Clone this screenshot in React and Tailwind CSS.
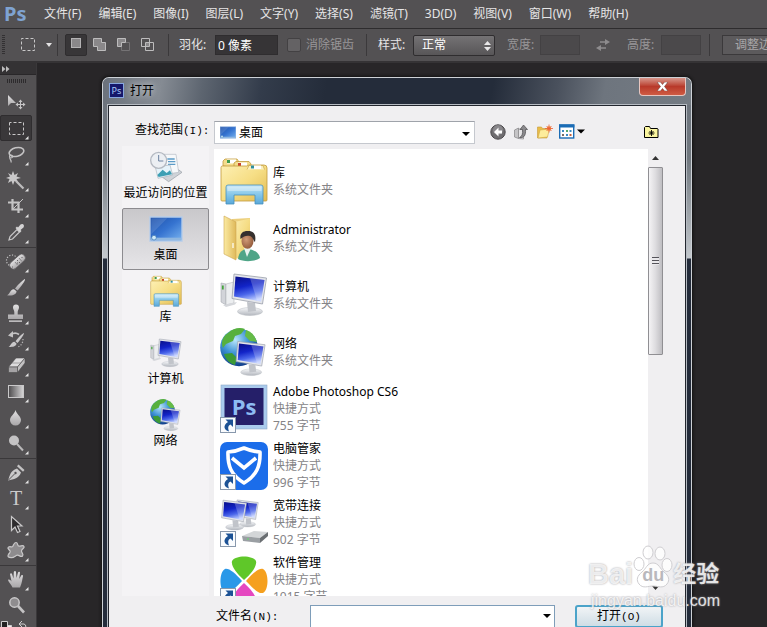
import React from 'react';

const MENUS = ['文件(F)', '编辑(E)', '图像(I)', '图层(L)', '文字(Y)', '选择(S)', '滤镜(T)', '3D(D)', '视图(V)', '窗口(W)', '帮助(H)'];

// shared gradients, referenced by id from the icons below
const Gradients = () => (
  <svg className="absolute w-0 h-0" aria-hidden="true">
    <defs>
      <linearGradient id="folder" x1="0" y1="0" x2="1" y2="1">
        <stop offset="0" stopColor="#fdf0b5" />
        <stop offset="0.5" stopColor="#f6de85" />
        <stop offset="1" stopColor="#e2bb52" />
      </linearGradient>
      <linearGradient id="flap" x1="0" y1="0" x2="1" y2="0">
        <stop offset="0" stopColor="#fbeaa2" />
        <stop offset="1" stopColor="#dfb95a" />
      </linearGradient>
      <linearGradient id="stand" x1="0" y1="0" x2="0" y2="1">
        <stop offset="0" stopColor="#c4e6f6" />
        <stop offset="0.5" stopColor="#86c7ea" />
        <stop offset="1" stopColor="#5aa8d8" />
      </linearGradient>
      <linearGradient id="screen" x1="0.2" y1="0" x2="0.5" y2="1">
        <stop offset="0" stopColor="#0a1290" />
        <stop offset="0.4" stopColor="#1224c8" />
        <stop offset="0.7" stopColor="#4a66ea" />
        <stop offset="1" stopColor="#c2d0ff" />
      </linearGradient>
      <linearGradient id="metal" x1="0" y1="0" x2="0" y2="1">
        <stop offset="0" stopColor="#f7f8fa" />
        <stop offset="1" stopColor="#b3b7be" />
      </linearGradient>
      <radialGradient id="globe" cx="0.4" cy="0.3" r="0.7">
        <stop offset="0" stopColor="#b9e6fb" />
        <stop offset="0.5" stopColor="#3f94d6" />
        <stop offset="1" stopColor="#123f8c" />
      </radialGradient>
      <linearGradient id="desk" x1="0" y1="0" x2="1" y2="1">
        <stop offset="0" stopColor="#1d4fa8" />
        <stop offset="0.5" stopColor="#3573d0" />
        <stop offset="1" stopColor="#79b4f0" />
      </linearGradient>
      <radialGradient id="skin" cx="0.4" cy="0.4" r="0.7">
        <stop offset="0" stopColor="#d19c78" />
        <stop offset="1" stopColor="#8d5335" />
      </radialGradient>
      <linearGradient id="tool" x1="0" y1="0" x2="0" y2="1">
        <stop offset="0" stopColor="#e2e1e2" />
        <stop offset="1" stopColor="#a9a7a9" />
      </linearGradient>
      <linearGradient id="ramp">
        <stop offset="0" stopColor="#4c4a4c" />
        <stop offset="1" stopColor="#d8d7d8" />
      </linearGradient>
    </defs>
  </svg>
);

/* ---------- tool icons, 32x26 box ---------- */

const toolArt = {
  move: (
    <g>
      <path d="M8 6v11l3-3 5 0z" fill="url(#tool)" />
      <path d="M20.500 11.500v8M16.500 15.500h8" stroke="#c6c5c6" />
      <path d="M20.500 10.500l2 2.500h-4zM20.500 20.500l2-2.500h-4zM15.500 15.500l2.500-2v4zM25.500 15.500l-2.500-2v4z" fill="#c6c5c6" />
    </g>
  ),
  marquee: <rect x="9.500" y="7.500" width="14" height="12" fill="none" stroke="#c9c8c9" strokeDasharray="3 2" strokeDashoffset="1" />,
  lasso: (
    <g fill="none" stroke="#c4c3c4" strokeWidth="1.600">
      <ellipse cx="16.500" cy="11" rx="7.500" ry="4.300" transform="rotate(-14 16.500 11)" />
      <circle cx="11" cy="15.500" r="1.500" strokeWidth="1.200" />
      <path d="M10 16.500c-1 2 2 2 1 5" strokeWidth="1.200" />
    </g>
  ),
  wand: (
    <g>
      <path d="M13 4l1.500 4 3.500-2-1.500 3.500L21 11l-4.500 1 2 4-4-2-1.500 4-1.500-4-3.500 2 1.500-4L6 11l4-1.500L8 6l3.500 2z" fill="#c9c8c9" />
      <path d="M16 14l7.500 7.500" stroke="#bdbcbd" strokeWidth="2.200" />
    </g>
  ),
  crop: (
    <g fill="none" stroke="#c4c3c4" strokeWidth="2.200">
      <path d="M12.500 6v10.500H23M8 9.500h10.500V20" />
      <path d="M13 16l10-10" strokeWidth="1" />
    </g>
  ),
  eyedropper: (
    <g>
      <path d="M9 21l1-3.500 7-7 2.500 2.500-7 7z" fill="#555355" stroke="#c9c8c9" strokeWidth="1.200" />
      <path d="M15.500 9l1.500-1.500 1 1 2.500-3c2-1.500 4.500.500 3 3l-3 2.500 1 1-1.500 1.500z" fill="#d3d2d3" />
    </g>
  ),
  heal: (
    <g>
      <circle cx="12" cy="12.500" r="5.500" fill="none" stroke="#c4c3c4" strokeWidth="1.200" strokeDasharray="1.200 1.600" />
      <rect x="8.500" y="10" width="18.500" height="7.500" rx="3.700" fill="url(#tool)" stroke="#555355" strokeWidth="0.600" transform="rotate(-42 17.500 14)" />
      <path d="M15 14l2.500 3M19 10l3 3.500" stroke="#777577" strokeWidth="0.800" />
      <path d="M17.500 12v1M19.500 14v1M17.500 14.500v1M12.500 18.500v1M22 9v1" stroke="#666466" />
    </g>
  ),
  brush: (
    <g fill="url(#tool)">
      <path d="M25 5c.700 1-4 8-7.500 11.500L15 14.500C18 10.500 24 5 25 5z" />
      <path d="M14 15.200l2.500 2c0 3-4 5.300-9.500 4 3-.700 2.500-5.500 7-6z" />
    </g>
  ),
  stamp: (
    <g fill="url(#tool)">
      <path d="M13 7.500a3 3 0 016 0c0 2-1.300 2.500-1.300 4.500v2.500H23V19H8v-4.500h6.300V12c0-2-1.300-2.500-1.300-4.500z" />
      <path d="M9 20.500h13V22H9z" />
    </g>
  ),
  history: (
    <g>
      <path d="M24 7c.500.800-3 6-6.500 10l-2-1.800C18.500 11 23 7 24 7z" fill="#c9c8c9" />
      <path d="M14.500 15.800l2 1.800c0 2.500-4 4-8 3.200 2.500-.600 2-4.500 6-5z" fill="#c9c8c9" />
      <path d="M11 8.500c3-2 6-1.500 8 0" fill="none" stroke="#c4c3c4" strokeWidth="1.600" />
      <path d="M13 5v6.500L8 9.500z" fill="#c4c3c4" />
      <path d="M23 13c0 3-1 6-5 8" fill="none" stroke="#b4b3b4" strokeWidth="1.200" strokeDasharray="1.200 1.600" />
    </g>
  ),
  eraser: (
    <g stroke="#4b494b" strokeWidth="0.600">
      <path d="M16 6h9l-7.500 9H8.500z" fill="#dddcdd" />
      <path d="M8.500 15h9v5.500h-9z" fill="#a5a3a5" />
      <path d="M17.500 15L25 6v5l-7.500 9.500z" fill="#c2c1c2" />
      <path d="M12 11l9 0" stroke="#7b797b" />
    </g>
  ),
  gradient: <rect x="8.500" y="7.500" width="15" height="12" fill="url(#ramp)" stroke="#c9c8c9" />,
  blur: <path d="M15.500 6c1 4 5.500 6.500 5.500 10a5.500 5.500 0 01-11 0c0-3.500 4.500-6 5.500-10z" fill="url(#tool)" />,
  dodge: (
    <g>
      <path d="M17 14l6 6.500" stroke="#b9b8b9" strokeWidth="2" />
      <circle cx="14" cy="10.500" r="5" fill="#c4c3c4" />
    </g>
  ),
  pen: (
    <g>
      <path d="M8 21.500c2-5 2-9.500 9-12l4 4c-2 6-7 6.500-13 8z" fill="#cbcacb" />
      <path d="M8.500 21l6-6" stroke="#555355" />
      <circle cx="15.500" cy="14" r="1.200" fill="#555355" />
      <path d="M18.500 5.500l6 5.500-1.500 1.800-6-5.500z" fill="#c4c3c4" />
    </g>
  ),
  select: <path d="M11.500 5.500v14l3.500-3.500 2.500 5.500 2.500-1-2.500-5.500h4.500z" fill="#2c2a2c" stroke="#c9c8c9" strokeWidth="1.200" />,
  shape: (
    <path
      d="M16 5.500c2.200 0 1 3.500 3 3.700s4-1.700 5 .300-3 2.500-2.500 4.800 2.500 3 1 4.700-3.500-1.200-5.300-.800-3.200 2.800-6 2.500-4-1.200-2.800-3.200 2.800-2 1.500-3.800-3-2.500-1.200-3.700 3 .800 4-.500 1-4 3.300-4z"
      fill="#8e8c8e"
      stroke="#c9c8c9"
      strokeWidth="1.200"
    />
  ),
  hand: (
    <path
      d="M12.500 21.500c-1-3-4-5-4.500-7.500 1-1 2.500 0 3.500 1.500L10 8c.500-1.300 1.800-1 2 0l1.500 4.500L13.800 6c.500-1.300 2-1.300 2.200 0l.500 6 1.500-5.500c.500-1.200 2-1 2 .200l-.800 6.300 2-3.500c.800-1 2-.300 1.800.800C22.300 13 22 17 20 21.500z"
      fill="url(#tool)"
    />
  ),
  zoom: (
    <g>
      <path d="M18 14l6 6.500" stroke="#c4c3c4" strokeWidth="2.600" />
      <circle cx="14.500" cy="10.500" r="4.700" fill="#8f8d8f" stroke="#c9c8c9" strokeWidth="1.500" />
    </g>
  ),
  type: (
    <text x="16" y="20" textAnchor="middle" fontSize="20" fontFamily="Liberation Serif, serif" fill="#cbcacb">T</text>
  ),
};

const TOOL_GROUPS = [
  [['move', '移动'], ['marquee', '矩形选框'], ['lasso', '套索'], ['wand', '魔棒'], ['crop', '裁剪'], ['eyedropper', '吸管']],
  [['heal', '修复画笔'], ['brush', '画笔'], ['stamp', '仿制图章'], ['history', '历史记录画笔'], ['eraser', '橡皮擦'], ['gradient', '渐变'], ['blur', '模糊'], ['dodge', '减淡']],
  [['pen', '钢笔'], ['type', '文字'], ['select', '路径选择'], ['shape', '自定形状']],
  [['hand', '抓手'], ['zoom', '缩放']],
];

const ToolButton = ({ name, label }) => (
  <button
    aria-label={label}
    className={
      name === 'marquee'
        ? 'block w-[32px] h-[26px] rounded-[2px] border border-[#2f2d2f] bg-[#3a383a]'
        : 'block w-[32px] h-[26px] border border-transparent'
    }
  >
    <svg width="32" height="26" viewBox="0 0 32 26" className="-ml-px -mt-px overflow-visible">
      {toolArt[name]}
      {name !== 'move' && name !== 'zoom' && <path d="M25 24.500h3.500V21z" fill="#e4e3e4" />}
    </svg>
  </button>
);

const Toolbar = () => (
  <aside className="w-[37px] shrink-0 bg-[#535153] border-r border-[#3a383a] overflow-hidden">
    <div className="h-3 bg-[#343234] border-b border-[#292729] flex items-center pl-[2px]">
      <svg width="8" height="6"><path d="M0 0l3.500 3L0 6zM4 0l3.500 3L4 6z" fill="#bdbcbd" /></svg>
    </div>
    <div className="h-[14px] pl-[7px] pt-1">
      <div className="w-5 h-1 bg-[repeating-linear-gradient(90deg,#2d2b2d_0_1px,#535153_1px_2px)]" />
    </div>
    {TOOL_GROUPS.map((group, i) => (
      <div key={i} className={i > 0 ? 'mt-[2px] border-t border-[#3a383a]' : ''}>
        {group.map(([name, label]) => <ToolButton key={name} name={name} label={label} />)}
      </div>
    ))}
    <svg width="32" height="12" fill="none" stroke="#d0cfd0" className="mt-[2px]">
      <path d="M1.500 1.500h6v8h-6z" fill="#222" />
      <path d="M7.500 5.500h4v6h-4" fill="#eee" />
      <path d="M20 4h4q2 0 2 4M22 1l-3 3 3 3" />
    </svg>
  </aside>
);

/* ---------- menu and options bars ---------- */

const MenuBar = () => (
  <nav className="h-[28px] shrink-0 flex items-center gap-[17px] bg-[#535153] pl-1 overflow-hidden whitespace-nowrap">
    <span className="w-[23px] text-[20px] leading-6 font-bold text-[#7fa3d1]">Ps</span>
    {MENUS.map((m) => (
      <button key={m} className="shrink-0 text-[#e6e5e6]">{m}</button>
    ))}
  </nav>
);

const Divider = () => <div className="w-px h-[22px] shrink-0 bg-[#3b393b]" />;

const OptionsBar = () => (
  <div className="h-[35px] shrink-0 flex items-center bg-[#535153] border-t border-b-2 border-t-[#2e2c2e] border-b-[#353335] overflow-hidden whitespace-nowrap text-[#e6e5e6]">
    <div className="ml-[2px] w-[3px] h-5 shrink-0 bg-[repeating-linear-gradient(180deg,#333133_0_1px,#535153_1px_2px)]" />
    <button className="ml-4 w-8 h-5 shrink-0" aria-label="工具预设">
      <svg width="32" height="20">
        <rect x="0.500" y="3.500" width="13" height="12" fill="none" stroke="#c9c8c9" strokeDasharray="3 2" strokeDashoffset="1" />
        <path d="M25 8h6l-3 4z" fill="#e4e3e4" />
      </svg>
    </button>
    <div className="ml-1"><Divider /></div>
    <button className="ml-[7px] w-[22px] h-[22px] shrink-0 rounded-[2px] border border-[#2f2d2f] bg-[#383638]" aria-label="新选区">
      <svg width="20" height="20"><rect x="5.500" y="3.500" width="9" height="9" fill="#8a888a" stroke="#b4b3b4" /></svg>
    </button>
    <button className="ml-[6px] shrink-0" aria-label="添加到选区">
      <svg width="14" height="14" fill="#8a888a" stroke="#bdbcbd"><path d="M.500.500h8v4h4v8h-8v-4h-4z" /></svg>
    </button>
    <button className="ml-[10px] shrink-0" aria-label="从选区减去">
      <svg width="14" height="14"><path d="M.500.500h8v4h-4v4h-4z" fill="#8a888a" stroke="#bdbcbd" /><path d="M9 4.500h3.500v8h-8V9" fill="none" stroke="#757375" /></svg>
    </button>
    <button className="ml-[10px] shrink-0" aria-label="与选区交叉">
      <svg width="14" height="14" fill="none" stroke="#bdbcbd"><path d="M.500.500h8v8h-8zM4.500 4.500h8v8h-8z" /><path d="M5 5h3v3H5z" fill="#8a888a" stroke="none" /></svg>
    </button>
    <div className="ml-[13px]"><Divider /></div>
    <label htmlFor="feather" className="ml-[10px] w-9 shrink-0">羽化:</label>
    <input id="feather" defaultValue="0 像素" className="w-[63px] h-5 shrink-0 px-[2px] bg-[#363436] border border-[#2f2d2f] text-white" />
    <label className="ml-[9px] shrink-0 flex items-center gap-[5px] text-[#989698]">
      <input type="checkbox" disabled className="appearance-none w-[14px] h-[14px] rounded-[2px] border border-[#434143] bg-[#646264]" />
      消除锯齿
    </label>
    <div className="ml-3"><Divider /></div>
    <label htmlFor="style" className="ml-[11px] w-[35px] shrink-0">样式:</label>
    <div className="relative shrink-0">
      <select id="style" className="block appearance-none w-[82px] h-[21px] pl-2 rounded-[2px] border border-[#2f2d2f] bg-linear-to-b from-[#747274] to-[#585658] text-white">
        <option>正常</option>
      </select>
      <svg width="7" height="10" className="absolute right-1 top-[6px] pointer-events-none"><path d="M0 4l3.500-4L7 4zM0 6l3.500 4L7 6z" fill="#e9e8e9" /></svg>
    </div>
    <label htmlFor="w" className="ml-3 w-[33px] shrink-0 text-[#989698]">宽度:</label>
    <input id="w" disabled className="w-[40px] h-5 shrink-0 border border-[#434143] bg-[#4b494b]" />
    <button className="ml-4 shrink-0" aria-label="互换">
      <svg width="14" height="14" fill="#8e8c8e"><path d="M4 3.200h5V1l5 3-5 3V4.800H4zM10 9.200H5V7L0 10l5 3v-2.200h5z" /></svg>
    </button>
    <label htmlFor="h" className="ml-[17px] w-[34px] shrink-0 text-[#989698]">高度:</label>
    <input id="h" disabled className="w-[40px] h-5 shrink-0 border border-[#434143] bg-[#4b494b]" />
    <div className="ml-2"><Divider /></div>
    <button className="ml-3 h-5 shrink-0 px-3 border border-[#3b393b] bg-[#5c5a5c] text-[#a9a7a9]">调整边缘...</button>
  </div>
);

/* ---------- file and place icons, 48x48 box ---------- */

const LibraryArt = () => (
  <g strokeLinejoin="round">
    <path d="M3 9V4l2-2h12l2 3v6z" fill="#f3dc8c" stroke="#c29a3c" strokeWidth="0.800" />
    <path d="M7 2.500h9v4H7z" fill="#fff" /><path d="M7 3h3v3H7z" fill="#3f9b4c" />
    <path d="M14 11V6l2-1.500h13l2 2.500v4z" fill="#f3dc8c" stroke="#c29a3c" strokeWidth="0.800" />
    <path d="M18 5.500h9v4h-9z" fill="#fff" /><path d="M18 6h3v3h-3z" fill="#c8452c" />
    <path d="M1 43V10.500q0-1.500 1.500-1.500H27L29 8h15q3 0 3 3v32q0 1-1 1H2q-1 0-1-1z" fill="url(#folder)" stroke="#c29a3c" strokeWidth="0.800" />
    <path d="M27 12.500l2-4h14l1.500 4" fill="#faf0c0" stroke="#c29a3c" strokeWidth="0.600" />
    <path d="M31 8.500h10v3.500H31z" fill="#fff" /><path d="M31 8.500h3v3h-3z" fill="#2e8f9c" />
    <path d="M6 30q0-2 2-2h33q2 0 2 2v17h-8V38H14v9H6z" fill="url(#stand)" stroke="#4690bd" strokeWidth="0.800" />
    <path d="M7.500 30.500q0-1 1-1h32q1 0 1 1V34h-34z" fill="#fff" opacity="0.350" />
  </g>
);

const UserArt = () => (
  <g>
    <path d="M12 5l18-1v38l-15 2z" fill="#eccf7d" />
    <path d="M14.500 8L30 4.500V42l-15.500 3z" fill="url(#folder)" opacity="0.900" />
    <path d="M4 2l12 6v38L4 40z" fill="url(#flap)" stroke="#cda651" strokeWidth="0.600" />
    <path d="M13 29v5" stroke="#fff" strokeWidth="1.200" />
    <path d="M18 45c1-7 4-9.500 9-10 6 .300 12 3 13 9-5 4-17 4-22 1z" fill="#4fa587" />
    <path d="M24 34l3 9 4-9z" fill="#e9f3f0" />
    <ellipse cx="27.500" cy="27" rx="6" ry="7.800" fill="url(#skin)" />
    <path d="M20.500 25c-1-6 3-8.500 8-8 5 0 8 3 6.500 11-1.500-1-2-5-5-6s-6.500 0-9.500 3z" fill="#35302e" />
  </g>
);

const MonitorArt = () => (
  <g strokeLinejoin="round">
    <ellipse cx="30" cy="40.500" rx="12.500" ry="4" fill="url(#metal)" stroke="#b6bac1" strokeWidth="0.500" />
    <path d="M27 31l8 1 1 8-8 1z" fill="#c1c4ca" />
    <path d="M14 3l32.500 4-4 26-30.500-5.500z" fill="#e3e5ea" stroke="#9ba0ab" strokeWidth="0.800" />
    <path d="M15.500 5.500l29 3.500-3.500 21.500L14 25.500z" fill="url(#screen)" />
    <path d="M30 7.300l14.500 1.700L41 30.500l-4-.700z" fill="#fff" opacity="0.220" />
  </g>
);

const ComputerArt = () => (
  <g>
    <path d="M1 12l5 1v21l-5-3z" fill="#d2d4d9" stroke="#9b9fa6" strokeWidth="0.500" />
    <path d="M2.800 14.500v4" stroke="#45a53c" strokeWidth="1.800" />
    <path d="M6 13l8-2v21l-8 2z" fill="#eceef0" stroke="#aaadb3" strokeWidth="0.500" />
    <path d="M3 34l14-3-2 2.500L6 36z" fill="#d5d7db" />
    <MonitorArt />
  </g>
);

const NetworkArt = () => (
  <g>
    <circle cx="19" cy="19.500" r="18.800" fill="url(#globe)" />
    <path d="M8 5c5-5 12-6 17-4l-4 5-6 2-2 5-7 3-3 4C.500 14 3 8 8 5z" fill="#57b03e" />
    <path d="M26 2c6 2 9 6 11 12l-7-1-5-5z" fill="#65bb47" />
    <path d="M4 26l8-1 5 5-2 7c-6-2-9-5-11-11z" fill="#3c9a36" />
    <g transform="translate(6 11) scale(0.840 0.820)"><MonitorArt /></g>
  </g>
);

const Shortcut = () => (
  <g>
    <rect x="0.500" y="32.500" width="15" height="15" fill="#fafcfe" stroke="#8898ac" />
    <path d="M5.500 34.500H13v7.500l-2.500-2.500c-2.500 1-3 3.500-1.500 7-5-1.500-6.500-6-1-9.500z" fill="#1c5295" />
  </g>
);

const PsArt = () => (
  <g>
    <rect x="1" y="0" width="46" height="44" fill="#a9caec" stroke="#8fa9c5" strokeWidth="0.600" />
    <rect x="4.500" y="3" width="39" height="37" fill="#251f69" />
    <text x="24" y="30" textAnchor="middle" fontSize="22" fontWeight="bold" fontFamily="Open Sans, sans-serif" fill="#8dbcf2">Ps</text>
    <Shortcut />
  </g>
);

const ShieldArt = () => (
  <g>
    <rect width="48" height="48" rx="7" fill="#1b6dea" />
    <path d="M24 6q8 3.500 16 4c.500 14-3 23-16 31C11 33 7.500 24 8 10q8-.500 16-4z" fill="none" stroke="#fff" strokeWidth="3.600" strokeLinejoin="round" />
    <path d="M12 16l12 10 12-10" fill="none" stroke="#fff" strokeWidth="3.600" />
    <Shortcut />
  </g>
);

const BroadbandArt = () => (
  <g>
    <g transform="translate(8 -1) scale(0.650)"><MonitorArt /></g>
    <g transform="translate(-7 -1) scale(0.720)"><MonitorArt /></g>
    <path d="M22 37l12-5 14 1-8 6z" fill="#d3d6d8" />
    <path d="M22 37l18 2v5l-17-2z" fill="#9a9fa3" /><path d="M40 39l8-6v4l-8 7z" fill="#6a6e72" />
    <path d="M27 40h2" stroke="#5fe06a" strokeWidth="1.200" />
    <Shortcut />
  </g>
);

const CloverArt = () => (
  <g>
    <path d="M24 24C16 17 11 10 12 5c3-6 21-6 24 0 1 5-4 12-12 19z" fill="#5fc729" />
    <path d="M22 25C15 17 9 12 5 13c-6 3-6 21 0 24 5 1 10-5 17-12z" fill="#2a98e8" />
    <path d="M26 25c7-8 13-13 17-12 6 3 6 21 0 24-5 1-10-5-17-12z" fill="#f5a01f" />
    <path d="M24 27c8 7 13 14 12 19-3 6-21 6-24 0-1-5 4-12 12-19z" fill="#e548c0" />
    <Shortcut />
  </g>
);

const DesktopArt = () => (
  <g>
    <path d="M0 6h48v36H0z" fill="url(#desk)" stroke="#b5cdea" strokeWidth="2" />
    <path d="M2 8h24L2 32z" fill="#fff" opacity="0.120" />
    <path d="M1 37h46v4H1z" fill="#8fb7e0" />
    <circle cx="6" cy="37" r="3.500" fill="#cfe9f7" stroke="#3a75b0" />
  </g>
);

const RecentArt = () => (
  <g>
    <path d="M14 36l26-10 8 6-20 14z" fill="#cfd3d8" stroke="#969ba3" />
    <path d="M21 5h18l4 27-20 3z" fill="#f6f8fa" stroke="#b4bac2" />
    <path d="M26 12h11M27 16h11M27 20h11" stroke="#5b9bc8" strokeWidth="2" />
    <path d="M8 24l22-3 4 15-22 5z" fill="#e6f3fa" stroke="#aab4bd" />
    <path d="M11 36l8-8 6 5 5-4 3 6-20 4z" fill="#3d9fb4" />
    <circle cx="13" cy="14" r="12" fill="#eceff3" stroke="#b5bac2" strokeWidth="2" />
    <path d="M13 6v9h7" fill="none" stroke="#6d82a0" strokeWidth="1.500" />
  </g>
);

const Icon = ({ art: Art, size }) => (
  <svg width={size} height={size} viewBox="0 0 48 48" className="shrink-0 overflow-visible" aria-hidden="true">
    <Art />
  </svg>
);

const PLACES = [
  { name: '最近访问的位置', art: RecentArt },
  { name: '桌面', art: DesktopArt, active: true },
  { name: '库', art: LibraryArt },
  { name: '计算机', art: ComputerArt },
  { name: '网络', art: NetworkArt },
];

const FILES = [
  { name: '库', info: ['系统文件夹'], art: LibraryArt },
  { name: 'Administrator', info: ['系统文件夹'], art: UserArt },
  { name: '计算机', info: ['系统文件夹'], art: ComputerArt },
  { name: '网络', info: ['系统文件夹'], art: NetworkArt },
  { name: 'Adobe Photoshop CS6', info: ['快捷方式', '755 字节'], art: PsArt },
  { name: '电脑管家', info: ['快捷方式', '996 字节'], art: ShieldArt },
  { name: '宽带连接', info: ['快捷方式', '502 字节'], art: BroadbandArt },
  { name: '软件管理', info: ['快捷方式', '1015 字节'], art: CloverArt },
];

/* ---------- open dialog ---------- */

const Hotkey = ({ children }) => (
  <span className="font-['Liberation_Mono',monospace] text-[11px]">{children}</span>
);

const TitleBar = () => (
  <header className="h-[27px] shrink-0 -mx-[5px] pl-[6px] flex rounded-t-[6px] bg-[linear-gradient(100deg,#6a717b_0%,#858b93_10%,#5d6570_17%,#333c4b_27%,#242c3a_38%,#242c3a_66%,#4a515d_77%,#6e757e_85%,#747b83_100%)]">
    <div className="flex-1 flex items-center gap-[6px] pb-[2px]">
      <span className="w-[15px] h-[15px] bg-[#15176b] border border-[#88a7e0] text-[9px] leading-[13px] text-center text-[#a8c8f8]">Ps</span>
      <h1 className="text-black [text-shadow:0_0_10px_#ccd0d5,0_0_6px_#ccd0d5]">打开</h1>
    </div>
    <button
      aria-label="关闭"
      className="mr-[5px] w-[47px] h-[18px] flex items-center justify-center rounded-b-[4px] border border-t-0 border-[#e7c6c0] bg-linear-to-b from-[#d6968c] via-[#b8392a] to-[#cf5b43]"
    >
      <svg width="11" height="9"><path d="M0 0h3.500l2 2.500 2-2.500H11L7.500 4.500 11 9H7.500l-2-2.500-2 2.500H0l3.500-4.500z" fill="#fff" stroke="#5c2a25" strokeWidth="0.500" /></svg>
    </button>
  </header>
);

const LookInRow = () => (
  <div className="h-[39px] shrink-0 flex items-center pl-[13px] pt-[14px]">
    <label htmlFor="lookin" className="w-[79px] shrink-0 pb-1">查找范围<Hotkey>(I):</Hotkey></label>
    <div className="relative w-[261px] h-[23px] shrink-0 flex items-center gap-[3px] pl-[5px] bg-white border border-[#c5c8ce] border-t-[#9fa3aa]">
      <svg width="16" height="13" viewBox="0 4 48 40" preserveAspectRatio="none"><DesktopArt /></svg>
      <select id="lookin" className="appearance-none flex-1 h-full outline-none">
        <option>桌面</option>
      </select>
      <svg width="8" height="4" className="absolute right-1 top-[10px] pointer-events-none"><path d="M0 0h8L4 4z" /></svg>
    </div>
    <div className="flex-1 flex items-center pl-[15px] pb-[2px]">
      <button aria-label="后退">
        <svg width="16" height="16"><circle cx="8" cy="8" r="7.200" fill="#6f6d70" stroke="#4b494c" /><circle cx="8" cy="6" r="5" fill="#9b999c" opacity="0.600" /><path d="M8.500 3.500L4 8l4.500 4.500V9.500H12v-3H8.500z" fill="#fff" /></svg>
      </button>
      <button aria-label="向上一级" className="ml-2">
        <svg width="15" height="16"><path d="M.500 6l4-2v10.500l-4-1.500z" fill="#c5c4c6" stroke="#858486" strokeWidth="0.700" /><path d="M4.500 5l5 0v10l-5-.500z" fill="#e6e5e7" stroke="#858486" strokeWidth="0.700" /><path d="M5.500 13.500c2.500-1 3.500-3.500 3-8H6L9.500 1l4 4.500h-2C12 11 10 14.500 5.500 13.500z" fill="#8a898c" stroke="#4c4b4e" strokeWidth="0.700" /></svg>
      </button>
      <button aria-label="新建文件夹" className="ml-[7px]">
        <svg width="17" height="16"><path d="M1.500 3h4l1 1.500H11V14H1.500z" fill="#e9bd48" stroke="#c79a36" strokeWidth="0.600" /><path d="M4 6l9.500-1-2 8-9.500 1z" fill="#fdec9b" stroke="#d0a844" strokeWidth="0.600" /><circle cx="13" cy="4.500" r="2.300" fill="#f7913d" /><path d="M13 .500v8M9 4.500h8M10.500 2l5 5M15.500 2l-5 5" stroke="#e8603c" strokeWidth="0.800" /></svg>
      </button>
      <button aria-label="查看" className="ml-[6px]">
        <svg width="26" height="15"><rect x="0.700" y="1" width="14" height="13" fill="#fff" stroke="#1b6cb5" strokeWidth="1.400" /><path d="M0 .500h15.400v3H0z" fill="#1b6cb5" /><path d="M3 6h2v2H3zM10.500 6h2v2h-2zM7 10h2v2H7z" fill="#3a8ac2" /><path d="M7 6h2v2H7z" fill="#59a86a" /><path d="M3 10h2v2H3z" fill="#7b6b64" /><path d="M10.500 10h2v2h-2z" fill="#c55f3a" /><path d="M18 5.500h8l-4 4z" /></svg>
      </button>
      <button aria-label="收藏夹" className="ml-auto mr-[4px]">
        <svg width="15" height="14" stroke="#000" fill="none"><path d="M.500 12.500v-10l1-1h4l1 2h7l.500.500v8.500z" fill="#fbf6a0" /><path d="M7.500 5v6M4.500 8h6M5.500 6l4 4M9.500 6l-4 4" strokeWidth="0.900" /></svg>
      </button>
    </div>
  </div>
);

const ScrollBar = () => (
  <div className="w-[15px] shrink-0 mt-[3px] flex flex-col items-center bg-[#f0eff1]" aria-hidden="true">
    <svg width="15" height="18"><path d="M4 11h7L7.500 7z" fill="#333" /></svg>
    <div className="w-full h-[188px] flex items-center justify-center border border-[#908f93] rounded-[1px] bg-linear-to-r from-[#f4f3f5] via-[#dddcdf] to-[#bfbec2]">
      <div className="w-[7px] h-2 bg-[repeating-linear-gradient(180deg,#55545a_0_1px,#e9e8eb_1px_3px)]" />
    </div>
    <svg width="15" height="14" className="mt-auto"><path d="M4 4h7l-3.500 4z" fill="#333" /></svg>
  </div>
);

const OpenDialog = () => (
  <section
    role="dialog"
    aria-label="打开"
    className="flex-1 min-w-0 flex flex-col px-[5px] rounded-t-[7px] border border-b-0 border-[#cdd1d6] shadow-[0_0_3px_1px_#111] bg-[linear-gradient(180deg,#6c737d_0,#71787f_80px,#c3c8cd_180px,#242c3b_181px)]"
  >
    <TitleBar />
    <div className="flex-1 min-h-0 flex flex-col pl-[13px] pr-[22px] border border-b-0 border-[#22262e] bg-[#f0eff1] shadow-[0_0_0_1px_#b6bbc2]">
      <LookInRow />
      <div className="flex-1 min-h-0 flex pt-px">
        <div className="w-[87px] shrink-0 mr-[5px] bg-[#f4f3f5]">
          {PLACES.map((p) => (
            <button
              key={p.name}
              className={
                p.active
                  ? 'w-full h-[62px] flex flex-col items-center justify-end pb-[2px] whitespace-nowrap border border-[#8c8b8f] rounded-[2px] bg-linear-to-b from-[#c9c8cb] to-[#e6e5e8]'
                  : 'w-full h-[62px] flex flex-col items-center justify-end pb-[3px] whitespace-nowrap'
              }
            >
              <Icon art={p.art} size={32} />
              <span className="h-[22px] pt-[2px]">{p.name}</span>
            </button>
          ))}
        </div>
        <ul className="flex-1 min-w-0 mt-[3px] overflow-hidden bg-white pl-[6px] pt-[3px]">
          {FILES.map((f) => (
            <li key={f.name} className="h-[57px] flex items-center gap-[5px]">
              <Icon art={f.art} size={48} />
              <div className="leading-[17px]">
                <p className="text-black">{f.name}</p>
                {f.info.map((line) => <p key={line} className="text-[#858487]">{line}</p>)}
              </div>
            </li>
          ))}
        </ul>
        <ScrollBar />
      </div>
      <div className="h-[31px] shrink-0 flex pl-[94px] pt-[9px]">
        <label htmlFor="filename" className="w-[94px] shrink-0 pt-[3px]">文件名<Hotkey>(N):</Hotkey></label>
        <div className="relative flex-1 mr-5">
          <input id="filename" className="w-full h-[23px] px-1 bg-white border border-[#7e9db9] outline-none" />
          <svg width="8" height="4" className="absolute right-1 top-[9px]"><path d="M0 0h8L4 4z" /></svg>
        </div>
        <button className="w-[88px] h-[23px] shrink-0 rounded-[3px] border-2 border-[#4ba3c9] bg-linear-to-b from-[#f1f4f6] to-[#cfdde5]">
          打开<Hotkey>(O)</Hotkey>
        </button>
      </div>
    </div>
  </section>
);

const Watermark = () => (
  <div className="absolute right-[43px] bottom-[16px] w-[136px] pointer-events-none text-white/80 font-['Liberation_Sans','Noto_Sans_CJK_SC',sans-serif] [text-shadow:0_0_2px_#98979c]">
    <div className="flex items-end h-[46px] font-bold">
      <span className="text-[29px] leading-[34px]">Bai</span>
      <div className="relative w-10 h-[46px]">
        <svg width="40" height="46" fill="#fff" fillOpacity="0.800" stroke="#cfced1">
          <ellipse cx="6" cy="19" rx="5" ry="6.500" />
          <ellipse cx="15" cy="7.500" rx="5" ry="6.500" />
          <ellipse cx="27" cy="8.500" rx="5" ry="6.500" />
          <ellipse cx="34" cy="20" rx="5" ry="6.500" />
          <path d="M20 18c6 0 7 6 11 9 5 4 6 8 3 12-4 5-9 2-14 2s-10 3-14-2c-3-4-2-8 3-12 4-3 5-9 11-9z" />
        </svg>
        <span className="absolute left-[9px] top-5 text-[18px] leading-5 text-[#b9b8bc] [text-shadow:none]">du</span>
      </div>
      <span className="text-[23px] leading-[34px] whitespace-nowrap">经验</span>
    </div>
    <p className="pl-[3px] text-[16px] leading-5">jingyan.baidu.com</p>
  </div>
);

export default function App() {
  return (
    <div className="relative h-screen flex flex-col overflow-hidden bg-[#282628] text-[12px] leading-4 font-['Noto_Sans','Noto_Sans_CJK_SC',sans-serif]">
      <Gradients />
      <MenuBar />
      <OptionsBar />
      <div className="flex-1 min-h-0 flex">
        <Toolbar />
        <main className="flex-1 min-w-0 flex pl-[65px] pr-[75px] pt-[14px]">
          <OpenDialog />
        </main>
      </div>
      <Watermark />
    </div>
  );
}
